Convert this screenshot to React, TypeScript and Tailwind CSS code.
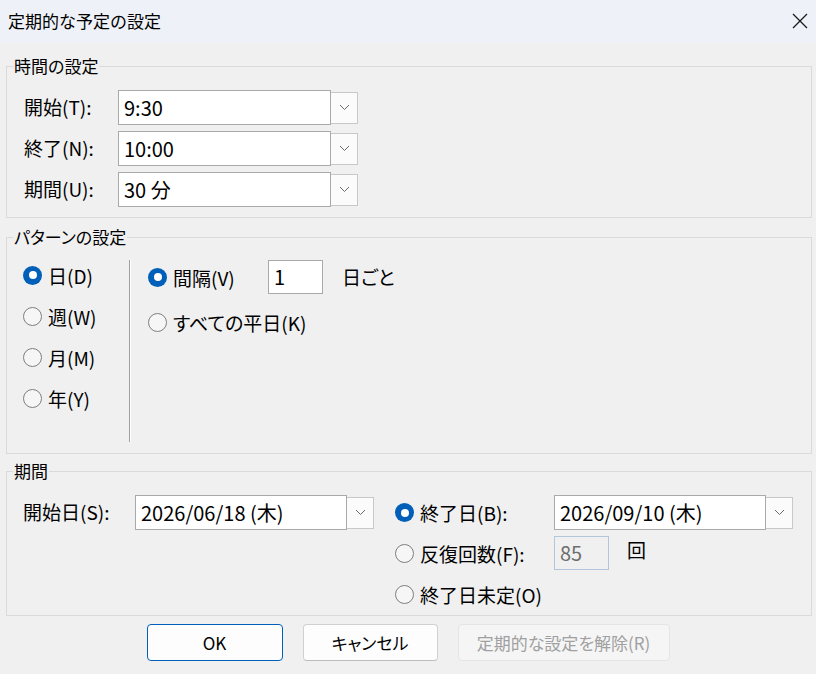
import React from 'react';

const font = "font-['Noto_Sans_CJK_JP','Noto_Sans',sans-serif]";

function Chevron() {
  return (
    <svg width="11" height="7" viewBox="0 0 11 7" fill="none">
      <path d="M1 1l4.5 4.5L10 1" stroke="#6a6a6a" strokeWidth="1" />
    </svg>
  );
}

function Combo({ value, width }: { value: string; width: string }) {
  return (
    <div className="flex items-center">
      <div className={`${width} h-[35px] bg-white border border-[#a9a9a9] flex items-center pl-[5px] text-[20px] text-black`}>
        {value}
      </div>
      <div className="w-[27px] h-[32px] bg-[#fbfbfb] border border-[#c8c8c8] border-l-0 flex items-center justify-center">
        <Chevron />
      </div>
    </div>
  );
}

function Radio({ checked, label }: { checked?: boolean; label: string }) {
  return (
    <div className="flex items-center gap-[6px]">
      {checked ? (
        <span className="w-[19px] h-[19px] rounded-full bg-[#005fb8] flex items-center justify-center">
          <span className="w-[8px] h-[8px] rounded-full bg-white" />
        </span>
      ) : (
        <span className="w-[19px] h-[19px] rounded-full border border-[#7e7e7e] bg-[#f6f6f6]" />
      )}
      <span className="text-[19px] leading-none text-black">{label}</span>
    </div>
  );
}

function Group({ title, children, className }: { title: string; children: React.ReactNode; className?: string }) {
  return (
    <fieldset className={`ml-[6px] mr-[4px] border border-[#dadada] ${className ?? ''}`}>
      <legend className="ml-[6px] px-[1px] text-[17px] leading-[24px] text-black">{title}</legend>
      {children}
    </fieldset>
  );
}

export default function App() {
  const timeRows = [
    { label: '開始(T):', value: '9:30' },
    { label: '終了(N):', value: '10:00' },
    { label: '期間(U):', value: '30 分' },
  ];

  return (
    <div className={`w-[816px] h-[674px] bg-[#f0f0f0] flex flex-col overflow-hidden ${font}`}>
      {/* Title bar */}
      <div className="h-[42px] bg-[#eef2f8] flex items-center justify-between pl-[8px] pr-[8px] shrink-0">
        <span className="text-[17px] text-black">定期的な予定の設定</span>
        <svg width="16" height="16" viewBox="0 0 16 16" fill="none">
          <path d="M1 1l14 14M15 1L1 15" stroke="#1a1a1a" strokeWidth="1.3" />
        </svg>
      </div>

      <div className="flex flex-col [font-feature-settings:'palt']">
        {/* 時間の設定 */}
        <Group title="時間の設定" className="mt-[12px]">
          <div className="flex flex-col gap-[6px] pt-[12px] pb-[10px] pl-[17px]">
            {timeRows.map((row) => (
              <div key={row.label} className="flex items-center">
                <span className="w-[94px] text-[19px] text-black">{row.label}</span>
                <Combo value={row.value} width="w-[213px]" />
              </div>
            ))}
          </div>
        </Group>

        {/* パターンの設定 */}
        <Group title="パターンの設定" className="mt-[7px]">
          <div className="flex pt-[11px] pb-[11px]">
            <div className="w-[122px] pl-[16px] flex flex-col gap-[11px]">
              <div className="h-[30px] flex items-center"><Radio checked label="日(D)" /></div>
              <div className="h-[30px] flex items-center"><Radio label="週(W)" /></div>
              <div className="h-[30px] flex items-center"><Radio label="月(M)" /></div>
              <div className="h-[30px] flex items-center"><Radio label="年(Y)" /></div>
            </div>
            <div className="w-[2px] h-[182px] border-l border-l-[#a0a0a0] border-r border-r-white" />
            <div className="pl-[17px] flex flex-col gap-[13px]">
              <div className="h-[34px] flex items-center">
                <div className="w-[120px]">
                  <Radio checked label="間隔(V)" />
                </div>
                <div className="w-[55px] h-[34px] bg-white border border-[#a9a9a9] flex items-center pl-[5px] text-[20px] text-black">
                  1
                </div>
                <span className="ml-[19px] text-[19px] text-black">日ごと</span>
              </div>
              <div className="h-[30px] flex items-center">
                <Radio label="すべての平日(K)" />
              </div>
            </div>
          </div>
        </Group>

        {/* 期間 */}
        <Group title="期間" className="mt-[5px]">
          <div className="flex pt-[12px] pb-[6px]">
            <div className="flex items-start pl-[16px]">
              <span className="w-[112px] h-[35px] flex items-center text-[19px] text-black">開始日(S):</span>
              <Combo value="2026/06/18 (木)" width="w-[212px]" />
            </div>
            <div className="ml-[21px] flex flex-col">
              <div className="h-[35px] flex items-center">
                <div className="w-[159px]">
                  <Radio checked label="終了日(B):" />
                </div>
                <Combo value="2026/09/10 (木)" width="w-[212px]" />
              </div>
              <div className="h-[34px] mt-[6px] flex items-center">
                <div className="w-[159px]">
                  <Radio label="反復回数(F):" />
                </div>
                <div className="w-[55px] h-[34px] bg-[#f0f0f0] border border-[#b3c7dc] flex items-center pl-[5px] text-[20px] text-[#6d6d6d]">
                  85
                </div>
                <span className="ml-[18px] -mt-[6px] text-[19px] text-black">回</span>
              </div>
              <div className="h-[30px] mt-[9px] flex items-center">
                <Radio label="終了日未定(O)" />
              </div>
            </div>
          </div>
        </Group>

        {/* Buttons */}
        <div className="mt-[8px] flex justify-center gap-[20px]">
          <button className="w-[136px] h-[37px] rounded-[4px] bg-[#fdfdfd] border border-[#005fb8] text-[17px] text-black">
            OK
          </button>
          <button className="w-[135px] h-[37px] rounded-[4px] bg-[#fdfdfd] border border-[#d0d0d0] border-b-[#bdbdbd] text-[17px] text-black">
            キャンセル
          </button>
          <button disabled className="w-[212px] h-[37px] rounded-[4px] bg-[#f5f5f5] border border-[#e5e5e5] text-[17px] text-[#a0a0a0]">
            定期的な設定を解除(R)
          </button>
        </div>
      </div>
    </div>
  );
}
